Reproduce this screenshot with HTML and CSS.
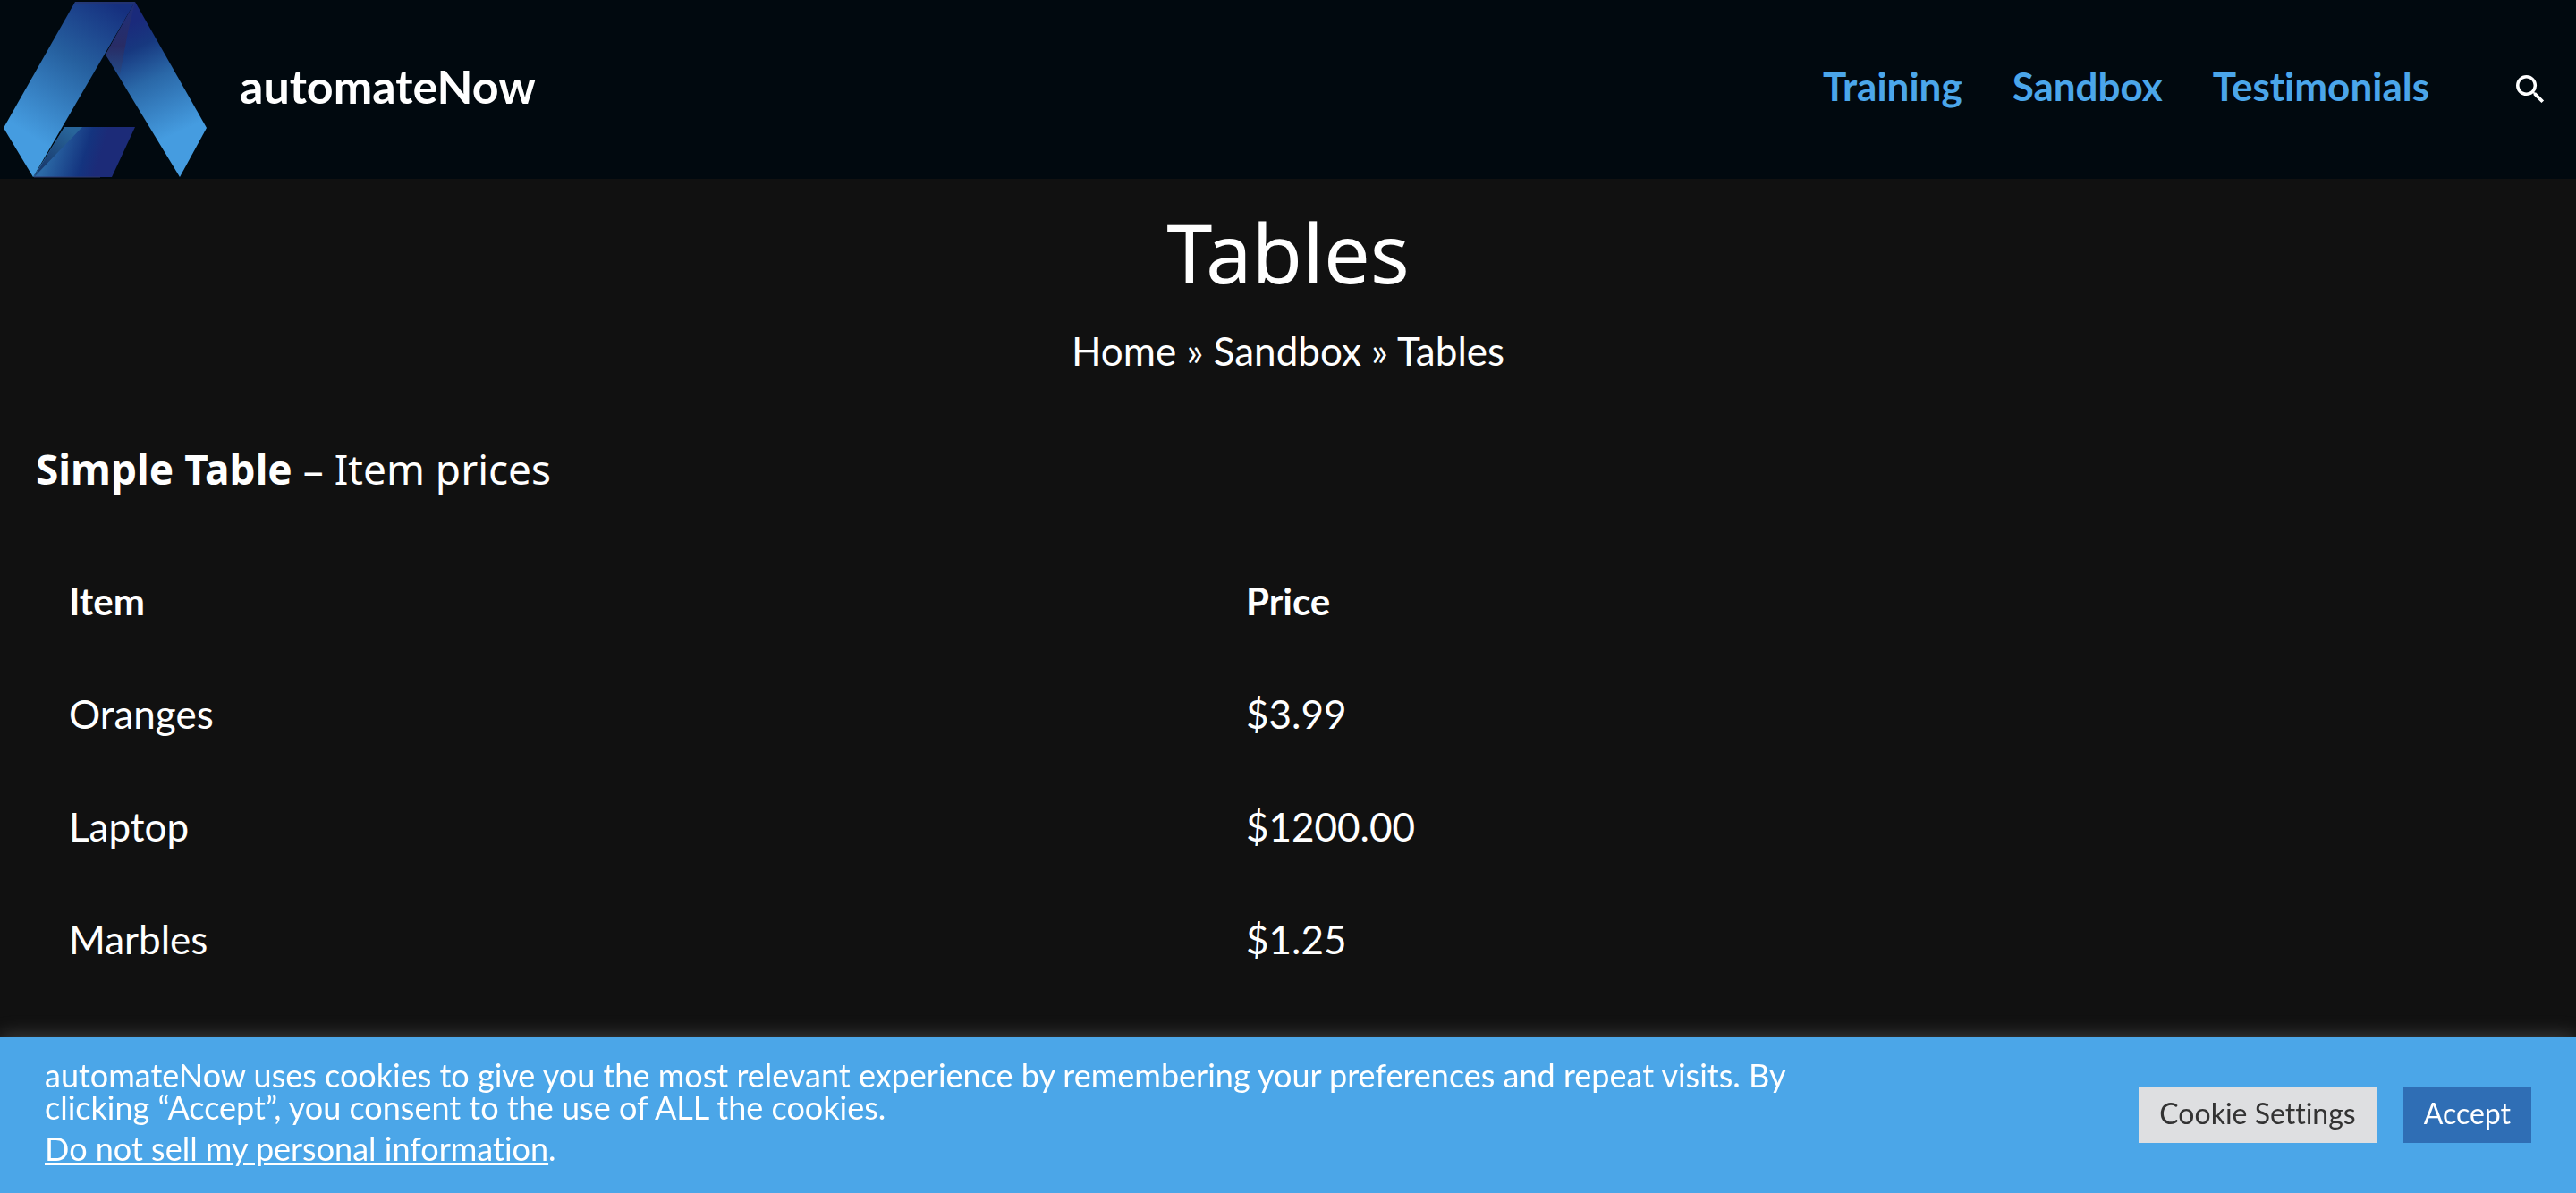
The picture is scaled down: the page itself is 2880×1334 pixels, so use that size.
FILE: index.html
```html
<!DOCTYPE html>
<html lang="en">
<head>
<meta charset="utf-8">
<title>Tables | automateNow</title>
<link rel="stylesheet" href="styles.css">
</head>
<body>
<header class="site-header">
  <a class="brand" href="#">
    <svg class="logo" viewBox="0 0 236 200" aria-hidden="true">
      <defs>
        <linearGradient id="left" gradientUnits="userSpaceOnUse" x1="136" y1="10" x2="30" y2="172">
          <stop offset="0" stop-color="#16307f"/><stop offset=".4" stop-color="#26609f"/><stop offset=".9" stop-color="#459ce0"/>
        </linearGradient>
        <linearGradient id="right" gradientUnits="userSpaceOnUse" x1="140" y1="30" x2="195" y2="150">
          <stop offset="0" stop-color="#1a2a7b"/><stop offset=".2" stop-color="#17387f"/><stop offset=".5" stop-color="#2a68a8"/><stop offset="1" stop-color="#459ce0"/>
        </linearGradient>
        <linearGradient id="foot" gradientUnits="userSpaceOnUse" x1="55" y1="165" x2="110" y2="182">
          <stop offset="0" stop-color="#2b69a6"/><stop offset=".7" stop-color="#14347f"/><stop offset="1" stop-color="#1c2b78"/>
        </linearGradient>
        <linearGradient id="fold" gradientUnits="userSpaceOnUse" x1="78" y1="145" x2="50" y2="185">
          <stop offset="0" stop-color="#28659a"/><stop offset="1" stop-color="#1a3d70"/>
        </linearGradient>
        <linearGradient id="crease" x1="0" y1="0" x2="0" y2="1">
          <stop offset="0" stop-color="#1e2f7c"/><stop offset=".6" stop-color="#282c65"/><stop offset="1" stop-color="#244b87"/>
        </linearGradient>
      </defs>
      <path fill="url(#right)" d="M151 2 231 143 201 198 118 61Z"/>
      <path fill="url(#crease)" d="M151 2 118 61 134 84 143 36Z"/>
      <path fill="url(#foot)" d="M72 142H151L125 198H37Z"/>
      <path fill="url(#fold)" d="M72 142H92L38 198Z"/>
      <path fill="url(#left)" d="M84 2H151L37 198 4 143Z"/>
      <path fill="none" stroke="#2e3669" stroke-width="1" d="M84 3H151M38 198H112"/>
    </svg>
    <span class="brand-name">automateNow</span>
  </a>
  <nav class="nav" aria-label="Main">
    <a href="#">Training</a>
    <a href="#">Sandbox</a>
    <a href="#">Testimonials</a>
  </nav>
  <button class="search" type="button" aria-label="Search">
    <svg viewBox="3 3 18 18" aria-hidden="true"><path fill="#fff" d="M15.5 14h-.79l-.28-.27A6.47 6.47 0 0 0 16 9.500 6.500 6.500 0 1 0 9.500 16c1.610 0 3.090-.590 4.230-1.570l.27.28v.79l5 4.990L20.490 19l-4.990-5zm-6 0C7.010 14 5 11.990 5 9.500S7.010 5 9.500 5 14 7.010 14 9.500 11.990 14 9.500 14z"/></svg>
  </button>
</header>
<main class="content">
  <h1>Tables</h1>
  <nav class="crumbs" aria-label="Breadcrumb"><a href="#">Home</a> » <a href="#">Sandbox</a> » <span>Tables</span></nav>
  <h2><strong>Simple Table</strong> – Item prices</h2>
  <table class="prices">
    <thead><tr><th scope="col">Item</th><th scope="col">Price</th></tr></thead>
    <tbody>
      <tr><td>Oranges</td><td>$3.99</td></tr>
      <tr><td>Laptop</td><td>$1200.00</td></tr>
      <tr><td>Marbles</td><td>$1.25</td></tr>
    </tbody>
  </table>
</main>
<section class="cookie-bar" aria-label="Cookie notice">
  <div class="cookie-text">
    <p>automateNow uses cookies to give you the most relevant experience by remembering your preferences and repeat visits. By clicking “Accept”, you consent to the use of ALL the cookies.</p>
    <p><a href="#">Do not sell my personal information</a>.</p>
  </div>
  <div class="cookie-actions">
    <button class="btn btn-settings" type="button">Cookie Settings</button>
    <button class="btn btn-accept" type="button">Accept</button>
  </div>
</section>
</body>
</html>
```
FILE: styles.css
```css
* { box-sizing: border-box; }
body {
  margin: 0;
  background: #111;
  color: #fff;
  font: 44px/60px Lato, sans-serif;
  font-variant-ligatures: none;
}
a { color: inherit; text-decoration: none; }
button { border: 0; font: inherit; cursor: pointer; }

.site-header {
  display: flex;
  align-items: center;
  height: 200px;
  padding-right: 35px;
  background: #01090f;
}
.brand { display: flex; align-items: center; gap: 32px; margin-right: auto; }
.logo { width: 236px; height: 200px; }
.brand-name { padding-bottom: 8px; font-size: 52px; font-weight: 700; }
.nav { display: flex; gap: 56px; padding-bottom: 8px; color: #4ba6ea; font-weight: 700; }
.search { display: flex; margin-left: 97px; padding: 0; background: none; }
.search svg { width: 32px; height: 32px; }

.content { padding: 22px 40px; }
h1, h2 { margin: 0; font-family: "Noto Sans", sans-serif; font-weight: 400; }
h1 { font-size: 92px; line-height: 120px; text-align: center; }
.crumbs { margin-top: 20px; text-align: center; }
h2 { margin-top: 70px; font-size: 46px; line-height: 64px; }

.prices { width: 100%; margin-top: 53px; border-collapse: collapse; table-layout: fixed; }
.prices th, .prices td { padding: 33px 37px; text-align: left; }
.prices th { font-size: 42px; }
.prices th:first-child { width: 47%; }

.cookie-bar {
  position: fixed;
  inset: auto 0 0;
  display: flex;
  align-items: center;
  justify-content: space-between;
  padding: 24px 50px;
  background: #4ba6e8;
  box-shadow: 0 -2px 20px rgba(172, 171, 171, .3);
}
.cookie-text { width: 71%; padding-bottom: 8px; font-size: 36px; line-height: 36px; }
.cookie-text p { margin: 0 0 10px; }
.cookie-text p:last-child { margin: 0; }
.cookie-text a { text-decoration: underline; }
.cookie-actions { display: flex; gap: 30px; }
.btn { padding: 8px 23px 12px; font-size: 32px; line-height: 42px; }
.btn-settings { background: #dedfe1; color: #333; }
.btn-accept { background: #2f6eb5; color: #fff; }
```
